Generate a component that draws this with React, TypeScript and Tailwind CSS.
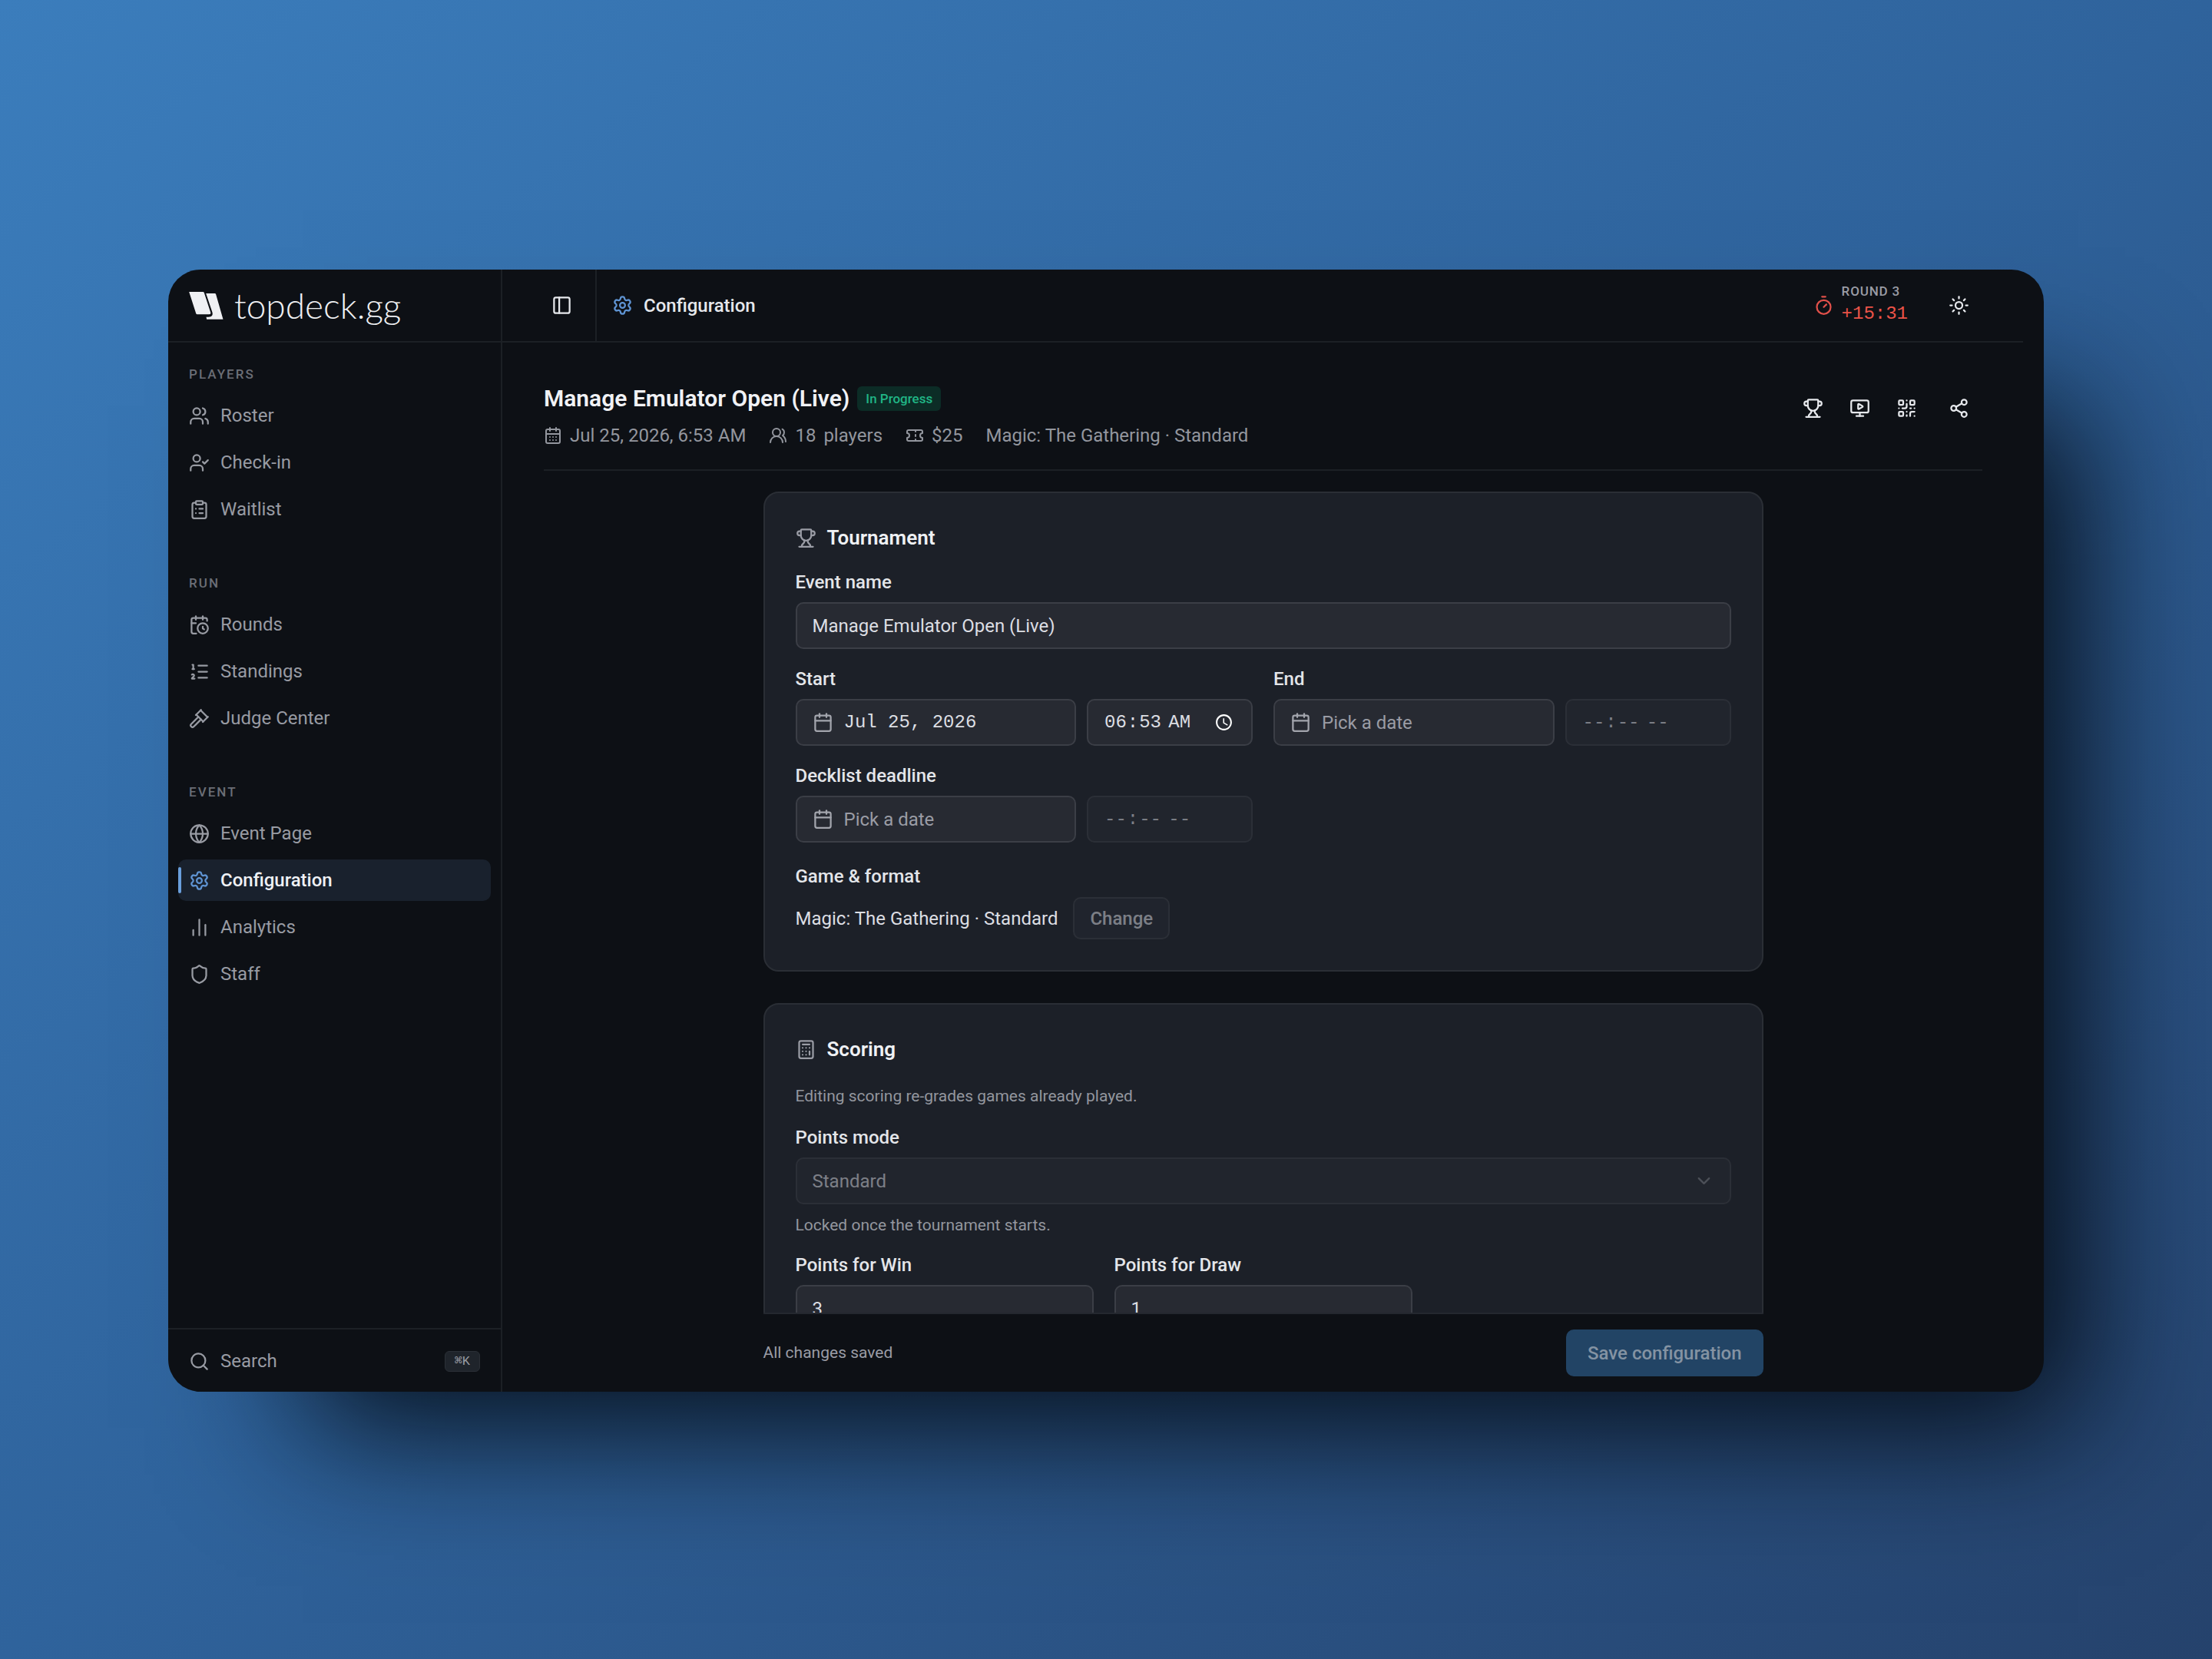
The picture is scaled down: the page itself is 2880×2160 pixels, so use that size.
import { useState } from 'react'
import type { LucideIcon } from 'lucide-react'
import {
  Calculator,
  Calendar,
  CalendarClock,
  CalendarDays,
  ChartNoAxesColumn,
  ChevronDown,
  ClipboardList,
  Gavel,
  Globe,
  ListOrdered,
  MonitorPlay,
  PanelLeft,
  QrCode,
  Search,
  Settings,
  Share2,
  Shield,
  Sun,
  Ticket,
  Timer,
  Trophy,
  UserCheck,
  Users,
  UsersRound,
} from 'lucide-react'

type NavItem = { label: string; icon: LucideIcon }

const navGroups: { title: string; items: NavItem[] }[] = [
  {
    title: 'Players',
    items: [
      { label: 'Roster', icon: Users },
      { label: 'Check-in', icon: UserCheck },
      { label: 'Waitlist', icon: ClipboardList },
    ],
  },
  {
    title: 'Run',
    items: [
      { label: 'Rounds', icon: CalendarClock },
      { label: 'Standings', icon: ListOrdered },
      { label: 'Judge Center', icon: Gavel },
    ],
  },
  {
    title: 'Event',
    items: [
      { label: 'Event Page', icon: Globe },
      { label: 'Configuration', icon: Settings },
      { label: 'Analytics', icon: ChartNoAxesColumn },
      { label: 'Staff', icon: Shield },
    ],
  },
]

const eventActions: NavItem[] = [
  { label: 'Bracket', icon: Trophy },
  { label: 'Stream view', icon: MonitorPlay },
  { label: 'QR code', icon: QrCode },
]

const fieldClass =
  'h-[61px] w-full min-w-0 rounded-[10px] border-2 border-[#3b3e46] bg-[#272a32] px-5 text-2xl text-[#dcdee3]'
const labelClass = 'block text-2xl leading-6 font-medium text-[#e4e6ea]'
const monoClass = "font-['Liberation_Mono',monospace]"

function Logo() {
  return (
    <a href="#home" className="flex h-[95px] shrink-0 items-center gap-[14px] border-b-2 border-[#1c2025] px-[27px] text-[#eff0f3]">
      <svg viewBox="0 0 134 108" className="h-9 w-[45px]" fill="currentColor" aria-hidden="true">
        <path d="M0 0H54Q58 0 59 4L84 80Q86 88 78 88H32Q28 88 27 84Z" />
        <path d="M66 6H100Q104 6 105 10L133 107H69L67 98H76Q96 97 91 80Z" />
      </svg>
      <span className="font-['Lato',sans-serif] text-[46px] leading-[60px] font-light">topdeck.gg</span>
    </a>
  )
}

function Sidebar() {
  const [active, setActive] = useState('Configuration')

  return (
    <aside className="flex w-[435px] shrink-0 flex-col border-r-2 border-[#1c2025]">
      <Logo />
      <nav className="flex flex-1 flex-col gap-[42px] px-[13px] pt-[14px]">
        {navGroups.map((group) => (
          <section key={group.title}>
            <h2 className="px-[14px] text-[17px] leading-[54px] font-medium tracking-[0.12em] text-[#6b6e76] uppercase">
              {group.title}
            </h2>
            <ul className="flex flex-col gap-[7px]">
              {group.items.map(({ label, icon: Icon }) => {
                const isActive = label === active
                return (
                  <li key={label}>
                    <a
                      href={'#' + label.toLowerCase().replace(' ', '-')}
                      onClick={() => setActive(label)}
                      className={`relative flex h-[54px] items-center gap-[14px] rounded-[10px] px-[14px] text-2xl ${
                        isActive ? 'bg-[#19212d] font-medium text-[#eff1f5]' : 'text-[#989ba3]'
                      }`}
                    >
                      {isActive && <span className="absolute top-[10px] left-0 h-[34px] w-1 rounded-full bg-[#6a9fdc]" />}
                      <Icon className={`size-[27px] ${isActive ? 'text-[#5f94d3]' : ''}`} />
                      {label}
                    </a>
                  </li>
                )
              })}
            </ul>
          </section>
        ))}
      </nav>
      <div className="border-t-2 border-[#1c2025] px-[13px] pt-[14px] pb-[13px]">
        <button type="button" className="flex h-[54px] w-full items-center gap-[14px] px-[14px] text-2xl text-[#989ba3]">
          <Search className="size-[27px]" />
          Search
          <kbd className={`ml-auto flex h-[27px] items-center rounded-md border border-[#2b3037] bg-[#1f242b] px-3 text-[17px] leading-none ${monoClass}`}>
            ⌘K
          </kbd>
        </button>
      </div>
    </aside>
  )
}

function TopBar() {
  return (
    <header className="flex h-[95px] shrink-0 items-center border-b-2 border-[#1c2025] pr-[53px] pl-[53px] text-[#e6e8ec]">
      <button type="button" aria-label="Toggle sidebar" className="flex size-12 items-center justify-center">
        <PanelLeft className="size-[27px]" />
      </button>
      <div className="ml-5 flex items-center gap-[14px] self-stretch border-l-2 border-[#1c2025] pl-5 text-2xl font-medium">
        <Settings className="size-[27px] text-[#5f94d3]" />
        Configuration
      </div>
      <div className="ml-auto flex items-center gap-[10px]">
        <Timer className="size-[27px] text-[#e0504a]" />
        <div className="flex flex-col gap-1 pb-1">
          <span className="text-[17px] leading-[22px] font-medium tracking-wider text-[#9a9ca5]">ROUND 3</span>
          <span className={`text-2xl leading-[30px] font-medium text-[#ea5348] ${monoClass}`}>+15:31</span>
        </div>
      </div>
      <button type="button" aria-label="Toggle theme" className="ml-9 flex size-[61px] items-center justify-center">
        <Sun className="size-[27px]" />
      </button>
    </header>
  )
}

function EventHeader() {
  return (
    <div className="flex items-start justify-between border-b-2 border-[#1c2025] pt-[55px] pb-[27px]">
      <div>
        <div className="flex items-center gap-[10px]">
          <h1 className="text-[30px] leading-9 font-semibold text-[#f1f2f5]">Manage Emulator Open (Live)</h1>
          <span className="rounded-md bg-[#0c2c26] px-[11px] text-[17px] leading-8 font-medium text-[#20b585]">In Progress</span>
        </div>
        <div className="mt-[13px] flex items-center gap-[30px] text-2xl leading-[34px] text-[#93969e]">
          <span className="flex items-center gap-[10px]">
            <CalendarDays className="size-6" />
            Jul 25, 2026, 6:53 AM
          </span>
          <span className="flex items-center gap-[10px]">
            <UsersRound className="size-6" />
            18 <span>players</span>
          </span>
          <span className="flex items-center gap-[10px]">
            <Ticket className="size-6" />
            $25
          </span>
          <span>Magic: The Gathering · Standard</span>
        </div>
      </div>
      <div className="flex items-center text-[#e6e8ec]">
        {eventActions.map(({ label, icon: Icon }) => (
          <button key={label} type="button" aria-label={label} className="flex size-[61px] items-center justify-center">
            <Icon className="size-[27px]" />
          </button>
        ))}
        <button type="button" aria-label="Share" className="ml-[7px] flex size-[61px] items-center justify-center">
          <Share2 className="size-[27px]" />
        </button>
      </div>
    </div>
  )
}

function Card({ title, icon: Icon, children }: { title: string; icon: LucideIcon; children: React.ReactNode }) {
  return (
    <section className="flex flex-col gap-[27px] rounded-[20px] border-2 border-[#2a2e35] bg-[#1c2028] p-10">
      <h2 className="flex items-center gap-[14px] text-[26px] leading-[37px] font-semibold text-[#eff1f4]">
        <Icon className="size-[27px] text-[#9a9ca5]" />
        {title}
      </h2>
      {children}
    </section>
  )
}

function DateTimeField({ id, label, date, time }: { id: string; label: string; date?: string; time?: string }) {
  return (
    <div className="flex flex-col gap-[14px]">
      <label htmlFor={id} className={labelClass}>
        {label}
      </label>
      <div className="flex gap-[14px]">
        <button id={id} type="button" className={`flex flex-1 items-center gap-[14px] ${fieldClass}`}>
          <Calendar className="size-[27px] text-[#a3a5ad]" />
          {date ? <span className={monoClass}>{date}</span> : <span className="text-[#9a9ca5]">Pick a date</span>}
        </button>
        <div className="w-[216px] shrink-0">
          <input
            type="time"
            aria-label={label + ' time'}
            defaultValue={time}
            disabled={!time}
            className={`scheme-dark disabled:opacity-50 ${fieldClass} ${monoClass}`}
          />
        </div>
      </div>
    </div>
  )
}

function TournamentCard() {
  return (
    <Card title="Tournament" icon={Trophy}>
      <div className="flex flex-col gap-[14px]">
        <label htmlFor="event-name" className={labelClass}>
          Event name
        </label>
        <input id="event-name" type="text" defaultValue="Manage Emulator Open (Live)" className={fieldClass} />
      </div>
      <div className="grid grid-cols-2 gap-[27px]">
        <DateTimeField id="start" label="Start" date="Jul 25, 2026" time="06:53" />
        <DateTimeField id="end" label="End" />
        <DateTimeField id="decklist-deadline" label="Decklist deadline" />
      </div>
      <div>
        <h3 className="text-2xl leading-[34px] font-medium text-[#e4e6ea]">Game &amp; format</h3>
        <div className="mt-[10px] flex items-center gap-5 text-2xl text-[#dcdee3]">
          Magic: The Gathering · Standard
          <button
            type="button"
            disabled
            className="h-[55px] rounded-[10px] border-2 border-[#3b3e46] bg-[#242932] px-5 font-medium disabled:opacity-50"
          >
            Change
          </button>
        </div>
      </div>
    </Card>
  )
}

function ScoringCard() {
  return (
    <Card title="Scoring" icon={Calculator}>
      <p className="text-[21px] leading-[30px] text-[#93969e]">Editing scoring re-grades games already played.</p>
      <div className="flex flex-col gap-[14px]">
        <label htmlFor="points-mode" className={labelClass}>
          Points mode
        </label>
        <div className="relative opacity-50">
          <select id="points-mode" disabled className={`appearance-none opacity-100 ${fieldClass}`}>
            <option>Standard</option>
          </select>
          <ChevronDown className="absolute top-[17px] right-[22px] size-[27px] text-[#7d8088]" />
        </div>
        <p className="text-[21px] leading-[26px] text-[#93969e]">Locked once the tournament starts.</p>
      </div>
      <div className="grid grid-cols-3 gap-[27px]">
        <div className="flex flex-col gap-[14px]">
          <label htmlFor="points-win" className={labelClass}>
            Points for Win
          </label>
          <input id="points-win" type="text" inputMode="numeric" defaultValue="3" className={fieldClass} />
        </div>
        <div className="flex flex-col gap-[14px]">
          <label htmlFor="points-draw" className={labelClass}>
            Points for Draw
          </label>
          <input id="points-draw" type="text" inputMode="numeric" defaultValue="1" className={fieldClass} />
        </div>
      </div>
    </Card>
  )
}

export default function App() {
  return (
    <div className="flex h-screen bg-linear-to-br from-[#3b7dbc] via-[#2f639c] to-[#25426c] px-[219px] pt-[351px] pb-[348px] font-['Roboto',sans-serif]">
      <div className="flex min-w-0 flex-1 overflow-hidden rounded-[42px] bg-[#0d1015] shadow-[110px_112px_170px_-65px_rgba(3,8,16,0.95)]">
        <Sidebar />
        <div className="mr-[27px] flex min-w-0 flex-1 flex-col">
          <TopBar />
          <main className="flex min-h-0 flex-1 flex-col pr-[53px] pl-[54px]">
            <EventHeader />
            <form className="mx-auto flex min-h-0 w-full max-w-[1302px] flex-1 flex-col" onSubmit={(e) => e.preventDefault()}>
              <div className="flex min-h-0 flex-1 flex-col gap-[41px] overflow-hidden pt-[27px]">
                <TournamentCard />
                <ScoringCard />
              </div>
              <div className="flex h-[103px] shrink-0 items-center justify-between border-t-2 border-[#24282f]">
                <span className="text-[21px] text-[#9a9ca5]">All changes saved</span>
                <button
                  type="submit"
                  disabled
                  className="h-[61px] rounded-[10px] bg-[#224465] px-7 text-2xl font-medium text-[#8493a3]"
                >
                  Save configuration
                </button>
              </div>
            </form>
          </main>
        </div>
      </div>
    </div>
  )
}
